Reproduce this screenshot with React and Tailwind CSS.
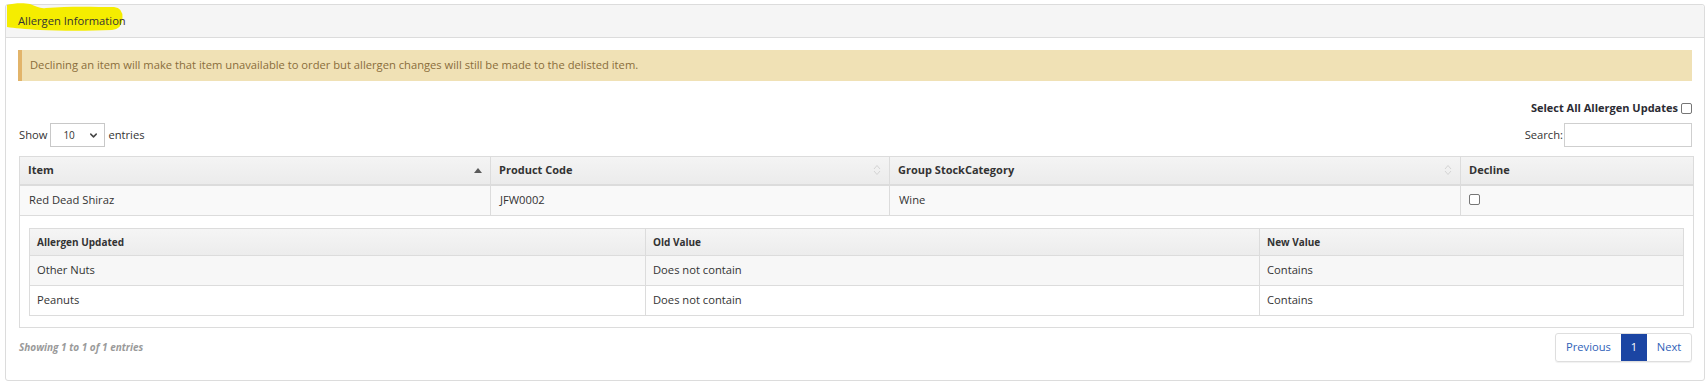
import { ChevronDown } from "lucide-react";

const items = [
  { item: "Red Dead Shiraz", code: "JFW0002", group: "Wine" },
];

const allergens = [
  { name: "Other Nuts", old: "Does not contain", next: "Contains" },
  { name: "Peanuts", old: "Does not contain", next: "Contains" },
];

function Checkbox() {
  return <span className="inline-block w-[11px] h-[11px] border border-[#767676] rounded-[2px] bg-white" />;
}

function SortAsc() {
  return (
    <svg width="8" height="5" viewBox="0 0 8 5" className="shrink-0">
      <path d="M0 5 L4 0 L8 5 Z" fill="#5a5a5a" />
    </svg>
  );
}

function SortBoth() {
  return (
    <svg width="8" height="12" viewBox="0 0 8 12" className="shrink-0">
      <path d="M1 5 L4 1.5 L7 5" fill="none" stroke="#d4d4d4" strokeWidth="1" />
      <path d="M1 7 L4 10.5 L7 7" fill="none" stroke="#d4d4d4" strokeWidth="1" />
    </svg>
  );
}

export default function App() {
  return (
    <div className="relative w-[1708px] h-[386px] bg-white pt-[4px] pl-[5px] pr-[3px] font-['Open_Sans',sans-serif] text-[#333]">
      <div className="h-[377px] border border-[#dcdcdc] rounded-[3px] flex flex-col">
        {/* Heading */}
        <div className="h-[33px] shrink-0 bg-[#f5f5f5] border-b border-[#dcdcdc] rounded-t-[3px] px-[12px] flex items-center text-[11.2px]">
          <span className="relative z-10">Allergen Information</span>
        </div>

        <div className="px-[12px] pt-[12px]">
          {/* Warning */}
          <div className="h-[31px] bg-[#f0e1b5] border-l-4 border-[#e2b46a] pl-[8px] flex items-center text-[11.2px] text-[#8a6d3b]">
            Declining an item will make that item unavailable to order but allergen changes will still be made to the delisted item.
          </div>

          <div className="mt-[16px] h-[22px] flex items-center justify-end gap-[3px] text-[11px] font-bold text-[#2b2b33]">
            Select All Allergen Updates
            <Checkbox />
          </div>

          {/* Length + search */}
          <div className="mt-[4px] h-[24px] flex items-center justify-between text-[11.2px]">
            <div className="flex items-center gap-[3px] pl-[1px]">
              <span>Show</span>
              <div className="w-[55px] h-[24px] border border-[#c8c8c8] flex items-center justify-between pl-[12px] pr-[5px] text-[10px]">
                <span>10</span>
                <ChevronDown size={11} strokeWidth={3.2} className="text-[#444]" />
              </div>
              <span>entries</span>
            </div>
            <div className="flex items-center gap-[1px]">
              <span>Search:</span>
              <div className="w-[128px] h-[24px] border border-[#cfcfcf]" />
            </div>
          </div>

          {/* Main table */}
          <table className="mt-[9px] w-[1674px] ml-[1px] table-fixed border-collapse text-[11.2px]">
            <colgroup>
              <col className="w-[471px]" />
              <col className="w-[399px]" />
              <col className="w-[571px]" />
              <col className="w-[233px]" />
            </colgroup>
            <thead>
              <tr className="h-[28px] bg-gradient-to-b from-[#f4f4f4] to-[#ebebeb]">
                <th className="border border-[#dcdcdc] border-b-2 px-[8px] text-left font-bold text-[11px]">
                  <div className="flex items-center justify-between">Item <SortAsc /></div>
                </th>
                <th className="border border-[#dcdcdc] border-b-2 px-[8px] text-left font-bold text-[11px]">
                  <div className="flex items-center justify-between">Product Code <SortBoth /></div>
                </th>
                <th className="border border-[#dcdcdc] border-b-2 px-[8px] text-left font-bold text-[11px]">
                  <div className="flex items-center justify-between">Group StockCategory <SortBoth /></div>
                </th>
                <th className="border border-[#dcdcdc] border-b-2 px-[8px] text-left font-bold text-[11px]">Decline</th>
              </tr>
            </thead>
            <tbody>
              {items.map((r) => (
                <tr key={r.code} className="h-[31px] bg-[#f9f9f9]">
                  <td className="border border-[#dcdcdc] px-[9px]">{r.item}</td>
                  <td className="border border-[#dcdcdc] px-[9px]">{r.code}</td>
                  <td className="border border-[#dcdcdc] px-[9px]">{r.group}</td>
                  <td className="border border-[#dcdcdc] px-[8px] leading-none">
                    <Checkbox />
                  </td>
                </tr>
              ))}
              <tr className="bg-white">
                <td colSpan={4} className="border border-[#dcdcdc] pl-[9px] pr-[9px] pt-[12px] pb-[11px]">
                  <table className="w-full table-fixed border-collapse text-[11.2px]">
                    <colgroup>
                      <col className="w-[616px]" />
                      <col className="w-[614px]" />
                      <col />
                    </colgroup>
                    <thead>
                      <tr className="h-[27px] bg-gradient-to-b from-[#f5f5f5] to-[#ececec]">
                        <th className="border border-[#dcdcdc] px-[7px] text-left font-bold text-[10px]">Allergen Updated</th>
                        <th className="border border-[#dcdcdc] px-[7px] text-left font-bold text-[10px]">Old Value</th>
                        <th className="border border-[#dcdcdc] px-[7px] text-left font-bold text-[10px]">New Value</th>
                      </tr>
                    </thead>
                    <tbody>
                      {allergens.map((a, i) => (
                        <tr key={a.name} className={`h-[30px] ${i % 2 === 0 ? "bg-[#f7f7f7]" : "bg-white"}`}>
                          <td className="border border-[#dcdcdc] px-[7px]">{a.name}</td>
                          <td className="border border-[#dcdcdc] px-[7px]">{a.old}</td>
                          <td className="border border-[#dcdcdc] px-[7px]">{a.next}</td>
                        </tr>
                      ))}
                    </tbody>
                  </table>
                </td>
              </tr>
            </tbody>
          </table>

          {/* Footer */}
          <div className="mt-[5px] flex items-center justify-between">
            <span className="pl-[1px] text-[10px] font-bold italic text-[#9a9a9a]">Showing 1 to 1 of 1 entries</span>
            <div className="flex h-[29px] border border-[#dedede] rounded-[3px] shadow-[0_1px_1px_rgba(0,0,0,0.06)] text-[11.2px] text-[#2f62b8]">
              <span className="w-[65px] flex items-center justify-center">Previous</span>
              <span className="w-[26px] flex items-center justify-center bg-[#1b45a3] text-white">1</span>
              <span className="w-[44px] flex items-center justify-center">Next</span>
            </div>
          </div>
        </div>
      </div>

      {/* Marker highlight over the heading */}
      <svg className="absolute left-0 top-0 pointer-events-none" width="130" height="36" viewBox="0 0 130 36">
        <path
          d="M7 5 C14 3 24 3 30 4 C36 6 40 9 46 8 C70 6 95 7 114 7 Q123 8 122.5 18 Q122 29 112 30 C90 31 60 31 40 30 C25 29 14 28 7 27 Z"
          fill="#f5ed00"
        />
      </svg>
    </div>
  );
}
